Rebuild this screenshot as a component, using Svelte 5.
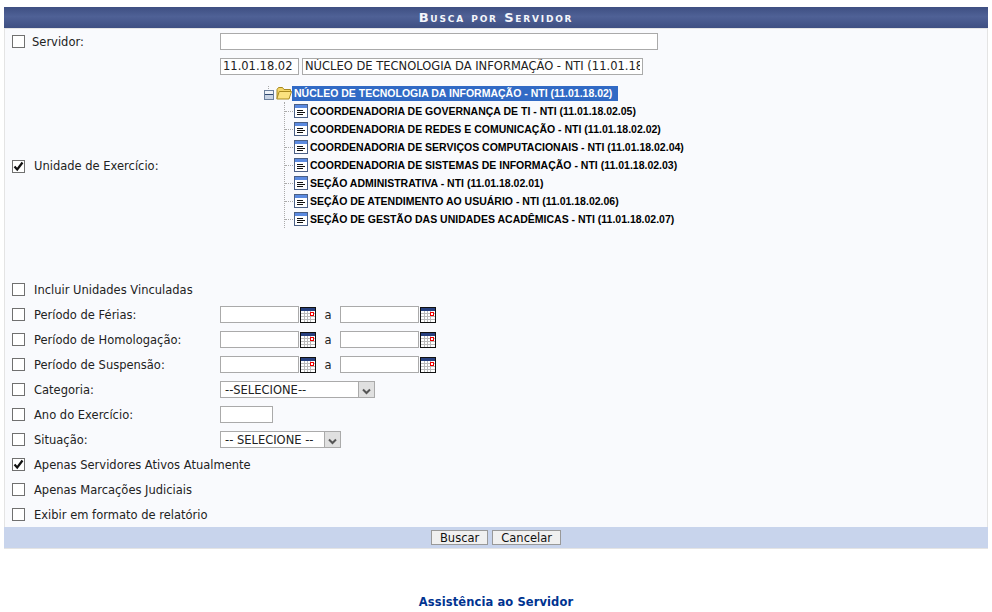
<script>
  const children = [
    'COORDENADORIA DE GOVERNANÇA DE TI - NTI (11.01.18.02.05)',
    'COORDENADORIA DE REDES E COMUNICAÇÃO - NTI (11.01.18.02.02)',
    'COORDENADORIA DE SERVIÇOS COMPUTACIONAIS - NTI (11.01.18.02.04)',
    'COORDENADORIA DE SISTEMAS DE INFORMAÇÃO - NTI (11.01.18.02.03)',
    'SEÇÃO ADMINISTRATIVA - NTI (11.01.18.02.01)',
    'SEÇÃO DE ATENDIMENTO AO USUÁRIO - NTI (11.01.18.02.06)',
    'SEÇÃO DE GESTÃO DAS UNIDADES ACADÊMICAS - NTI (11.01.18.02.07)'
  ];
  const periods = ['Período de Férias:', 'Período de Homologação:', 'Período de Suspensão:'];
</script>

{#snippet check(on)}
  <span class="check">
    {#if on}
      <svg width="11" height="11" viewBox="0 0 11 11"><path d="M1.5 5.5 L4.2 8.5 L9.5 1.5" fill="none" stroke="#111" stroke-width="2.2"/></svg>
    {/if}
  </span>
{/snippet}

{#snippet cal()}
  <svg class="cal" width="16" height="16" viewBox="0 0 16 16" shape-rendering="crispEdges">
    <rect x="0.5" y="0.5" width="15" height="15" fill="#fff" stroke="#111"/>
    <rect x="1" y="1" width="14" height="3" fill="#27407f"/>
    <path d="M4.5 4V15M7.5 4V15M10.5 4V15M1 6.5H15M1 9.5H15M1 12.5H15" stroke="#bbb" fill="none"/>
    <rect x="10.5" y="5.5" width="3" height="3" fill="#fff" stroke="#e00"/>
  </svg>
{/snippet}

{#snippet arrow()}
  <span class="arrow">
    <svg width="9" height="7" viewBox="0 0 9 7"><path d="M1 1.5 L4.5 5 L8 1.5" fill="none" stroke="#555" stroke-width="2"/></svg>
  </span>
{/snippet}

{#snippet nodeIcon()}
  <svg class="node" width="14" height="14" viewBox="0 0 14 14" shape-rendering="crispEdges">
    <rect x="0.5" y="0.5" width="13" height="13" fill="#fff" stroke="#4a5f85"/>
    <rect x="1" y="1" width="12" height="3" fill="#5b8ae0"/>
    <path d="M3 6.5H9M3 8.5H11M3 10.5H9" stroke="#111" fill="none"/>
  </svg>
{/snippet}

<main class="page">
  <h2 class="title">Busca por Servidor</h2>
  <div class="body">
    <div class="row">
      {@render check(false)}
      <span class="label first">Servidor:</span>
      <input class="field wide" type="text" />
    </div>
    <div class="row short">
      <span class="spacer"></span>
      <input class="field code" type="text" value="11.01.18.02" />
      <input class="field name" type="text" value="NÚCLEO DE TECNOLOGIA DA INFORMAÇÃO - NTI (11.01.18.02)" />
    </div>
    <div class="row tree-row">
      {@render check(true)}
      <span class="label">Unidade de Exercício:</span>
      <div class="tree">
        <div class="root">
          <span class="minus"></span>
          <svg class="folder" width="16" height="14" viewBox="0 0 16 14">
            <path d="M1 12.5V3.5L2.5 1.5H6.5L8 3.5H14.5V5.5" fill="#f5d768" stroke="#a98a20"/>
            <path d="M0.8 13H13L15.5 5.5H3.2Z" fill="#fbe27f" stroke="#a98a20"/>
          </svg>
          <span class="selected">NÚCLEO DE TECNOLOGIA DA INFORMAÇÃO - NTI (11.01.18.02)</span>
        </div>
        <ul class="kids">
          {#each children as c}
            <li>{@render nodeIcon()}<span class="kid">{c}</span></li>
          {/each}
        </ul>
      </div>
    </div>
    <div class="row">
      {@render check(false)}
      <span class="label">Incluir Unidades Vinculadas</span>
    </div>
    {#each periods as p}
      <div class="row">
        {@render check(false)}
        <span class="label fixed">{p}</span>
        <input class="field date" type="text" />
        {@render cal()}
        <span class="a">a</span>
        <input class="field date" type="text" />
        {@render cal()}
      </div>
    {/each}
    <div class="row">
      {@render check(false)}
      <span class="label fixed">Categoria:</span>
      <div class="select s1"><span>--SELECIONE--</span>{@render arrow()}</div>
    </div>
    <div class="row">
      {@render check(false)}
      <span class="label fixed">Ano do Exercício:</span>
      <input class="field year" type="text" />
    </div>
    <div class="row">
      {@render check(false)}
      <span class="label fixed">Situação:</span>
      <div class="select s2"><span>-- SELECIONE --</span>{@render arrow()}</div>
    </div>
    <div class="row">
      {@render check(true)}
      <span class="label">Apenas Servidores Ativos Atualmente</span>
    </div>
    <div class="row">
      {@render check(false)}
      <span class="label">Apenas Marcações Judiciais</span>
    </div>
    <div class="row">
      {@render check(false)}
      <span class="label">Exibir em formato de relatório</span>
    </div>
  </div>
  <div class="foot">
    <button type="button">Buscar</button>
    <button type="button">Cancelar</button>
  </div>
  <a class="link" href="#top">Assistência ao Servidor</a>
</main>

<style>
  :global(body) {
    margin: 0;
    background: #fff;
    font-family: "DejaVu Sans", Verdana, sans-serif;
    font-size: 11.5px;
    color: #222;
  }
  .page {
    padding: 7px 4px 0;
    display: flex;
    flex-direction: column;
  }
  .title {
    margin: 0;
    height: 21px;
    line-height: 21px;
    text-align: center;
    font-size: 13px;
    font-weight: bold;
    font-variant: small-caps;
    letter-spacing: 1.8px;
    color: #f4f6fb;
    background: linear-gradient(#3e4f82, #4f6196 45%, #3e4f82);
  }
  .body {
    background: #f9fafd;
    border-left: 1px solid #e4e4e4;
    border-right: 1px solid #e4e4e4;
    border-top: 1px solid #e4e4e4;
    display: flex;
    flex-direction: column;
    height: 499px;
    box-sizing: border-box;
    padding-left: 7px;
  }
  .row {
    height: 25px;
    display: flex;
    align-items: center;
    flex: none;
  }
  .short { height: 24px; }
  .check {
    width: 11px;
    height: 11px;
    border: 1px solid #707070;
    background: #fff;
    flex: none;
    display: flex;
  }
  .label {
    margin-left: 9px;
    white-space: nowrap;
  }
  .label.first {
    margin-left: 7px;
    width: 188px;
  }
  .label.fixed { width: 186px; }
  .spacer { width: 208px; flex: none; }
  input.field {
    box-sizing: border-box;
    height: 17px;
    border: 1px solid #aaa;
    background: #fff;
    padding: 0 2px;
    margin: 0;
    font: 11.5px "DejaVu Sans", Verdana, sans-serif;
    color: #222;
    outline: none;
    flex: none;
  }
  .wide { width: 438px; }
  .code { width: 79px; margin-right: 3px !important; }
  .name { width: 341px; }
  .date { width: 79px; }
  .year { width: 53px; }
  .cal { margin-left: 1px; flex: none; }
  .a { width: 24px; text-align: center; flex: none; }
  .tree-row {
    height: 199px;
    align-items: flex-start;
  }
  .tree-row .check { margin-top: 82px; }
  .tree-row .label { margin-top: 82px; width: 230px; line-height: 13px; }
  .tree {
    margin-top: 7px;
    font-family: "Liberation Sans", Arial, sans-serif;
    font-weight: bold;
    font-size: 10.5px;
    color: #000;
  }
  .root {
    display: flex;
    align-items: center;
    height: 16px;
    position: relative;
  }
  .root::before {
    content: "";
    position: absolute;
    left: 4px;
    top: 1px;
    height: 3px;
    border-left: 1px dotted #aaa;
  }
  .minus {
    box-sizing: border-box;
    width: 10px;
    height: 10px;
    border: 1px solid #6b7f9c;
    background: linear-gradient(#eef2f8 35%, #324a70 35%, #324a70 55%, #c8d3e4 55%);
    margin-right: 2px;
    margin-top: 3px;
    flex: none;
  }
  .folder { flex: none; margin-right: 0; }
  .selected {
    background: #316ac5;
    color: #fff;
    padding: 0 6px 0 2px;
    line-height: 15px;
    white-space: nowrap;
  }
  .kids {
    list-style: none;
    margin: 1px 0 0 20px;
    padding: 0 0 0 9px;
    border-left: 1px dotted #aaa;
    position: relative;
  }
  .kids li {
    height: 18px;
    display: flex;
    align-items: center;
    white-space: nowrap;
    position: relative;
  }
  .kids li::before {
    content: "";
    position: absolute;
    left: -9px;
    top: 9px;
    width: 8px;
    border-top: 1px dotted #aaa;
  }
  .kid { margin-left: 2px; }
  .select {
    box-sizing: border-box;
    height: 17px;
    border: 1px solid #aaa;
    background: #fff;
    display: flex;
    align-items: center;
    justify-content: space-between;
    padding-left: 4px;
    flex: none;
    color: #222;
    white-space: nowrap;
  }
  .s1 { width: 155px; }
  .s2 { width: 121px; }
  .arrow {
    box-sizing: border-box;
    width: 16px;
    height: 15px;
    background: #e0e0e0;
    border-left: 1px solid #aaa;
    display: flex;
    align-items: center;
    justify-content: center;
    padding-top: 3px;
  }
  .foot {
    height: 21px;
    background: #c8d4ec;
    border-bottom: 1px solid #e4e4e4;
    display: flex;
    justify-content: center;
    align-items: center;
    gap: 4px;
    box-sizing: content-box;
  }
  button {
    box-sizing: border-box;
    height: 15px;
    padding: 0 8px;
    border: 1px solid #999;
    background: #f0f0f0;
    font: 11.5px "DejaVu Sans", Verdana, sans-serif;
    line-height: 12px;
    color: #111;
  }
  .link {
    margin-top: 46px;
    text-align: center;
    font-weight: bold;
    font-size: 11.5px;
    letter-spacing: 0.1px;
    color: #003390;
    text-decoration: none;
  }
</style>
